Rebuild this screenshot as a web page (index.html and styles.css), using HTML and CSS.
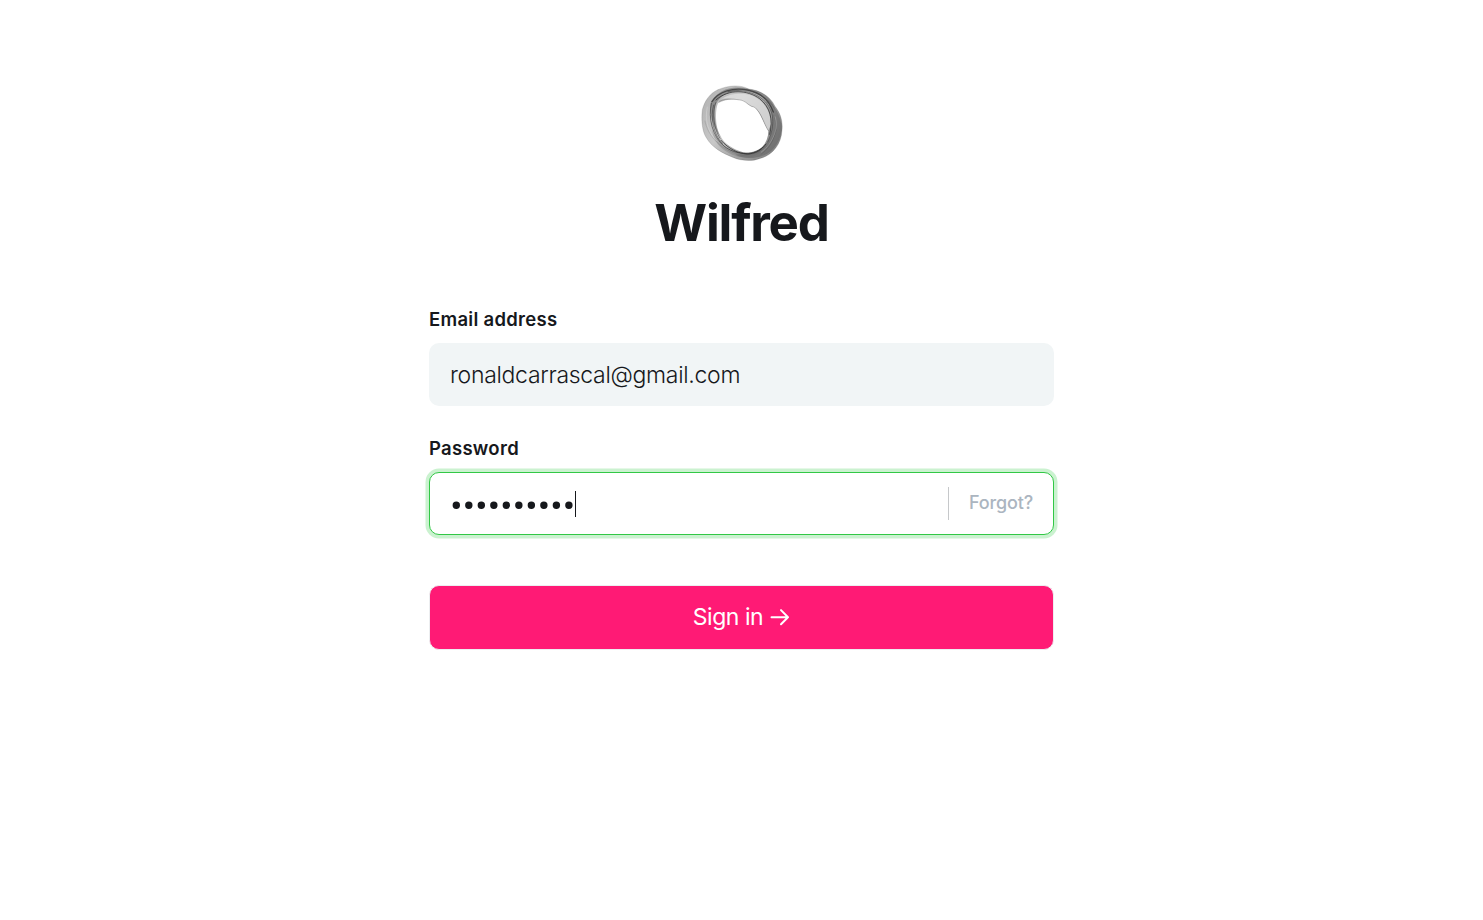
FILE: index.html
```html
<!DOCTYPE html>
<html lang="en">
<head>
<meta charset="utf-8">
<title>Wilfred</title>
<link rel="stylesheet" href="styles.css">
</head>
<body>
<main class="signin">
  <svg class="logo" viewBox="0 0 300 285" aria-hidden="true">
    <defs>
      <linearGradient id="shade" x1="0" y1="0.2" x2="1" y2=".8">
        <stop offset="0" stop-color="#b4b4b4"/>
        <stop offset=".35" stop-color="#c8c8c8"/>
        <stop offset=".65" stop-color="#a2a2a2"/>
        <stop offset="1" stop-color="#808080"/>
      </linearGradient>
    </defs>
    <path fill="url(#shade)" fill-rule="evenodd" d="M78 41C108 28 145 25 170 39C206 43 236 62 249 91C265 111 273 135 270 163C268 207 239 240 202 248C180 257 146 254 125 245C92 232 60 215 43 185C31 168 27 132 31 101C38 74 54 51 78 41ZM78 82C104 67 132 70 150 73C167 79 168 91 188 94C206 111 213 138 229 164C229 184 222 201 209 215C192 230 171 233 151 228C123 219 98 204 87 183C70 157 68 105 78 82Z"/>
    <path fill="#e2e2e2" fill-opacity=".75" d="M88 69C119 50 148 52 175 57C213 69 237 105 237 145L229 164C214 143 211 112 188 94C171 91 166 81 150 73C128 71 108 65 88 69Z"/>
    <path fill="#555" fill-opacity=".42" d="M215 62C244 83 250 157 230 193C212 222 180 239 130 235C155 254 213 248 238 224C257 207 270 181 269 150C266 126 252 83 215 62Z"/>
    <path fill="#555" fill-opacity=".45" d="M57 77C80 42 118 26 172 39C210 43 243 68 249 102C226 65 188 44 145 44C106 46 80 62 71 87C64 113 70 157 88 184C64 161 50 111 57 77Z"/>
    <path fill="#666" fill-opacity=".3" d="M60 161C77 202 112 229 162 231C191 232 210 219 219 203C211 235 180 249 145 243C101 233 66 207 60 161Z"/>
    <g fill="none" stroke="#222" stroke-linecap="round">
      <path stroke-width="4" stroke-opacity=".65" d="M60 77C80 45 124 34 166 42C204 49 231 72 244 108"/>
      <path stroke-width="3" stroke-opacity=".55" d="M58 82C48 126 61 182 97 211C130 236 178 242 213 213"/>
      <path stroke-width="3" stroke-opacity=".7" d="M87 193C112 220 137 232 166 234C188 233 208 224 222 204M72 72C110 37 167 42 203 68C235 94 244 130 233 175"/>
      <path stroke-width="2" stroke-opacity=".65" d="M71 80C59 111 65 157 84 187M65 87C54 122 64 176 91 203M108 47C148 38 193 49 221 78C250 112 247 158 227 198"/>
      <path stroke-width="1.8" stroke-opacity=".4" d="M82 76C109 64 128 70 150 73C166 79 171 91 188 94C209 112 214 140 229 164"/>
      <path stroke-width="1.5" stroke-opacity=".3" d="M78 41C108 28 145 25 170 39C206 43 236 62 249 91C265 111 273 135 270 163C268 207 239 240 202 248C180 257 146 254 125 245C92 232 60 215 43 185C31 168 27 132 31 101C38 74 54 51 78 41"/>
      <path stroke-width="1.5" stroke-opacity=".25" d="M39 135C47 182 91 225 145 236C190 242 243 213 253 161M245 119C261 155 248 207 207 235"/>
    </g>
    <path fill="none" stroke="#fff" stroke-width="3" stroke-opacity=".22" d="M46 92C37 134 49 171 76 196M249 121C261 158 243 201 207 229"/>
  </svg>
  <h1 class="title">Wilfred</h1>
  <form class="form">
    <div class="group">
      <div class="label">Email address</div>
      <div class="field"><span class="value">ronaldcarrascal@gmail.com</span></div>
    </div>
    <div class="group">
      <div class="label">Password</div>
      <div class="field field-focus">
        <svg class="dots" viewBox="0 0 126 26" aria-label="Password, 10 characters">
          <path d="M6.3 14.3h.01m12.5 0h.01m12.5 0h.01m12.5 0h.01m12.5 0h.01m12.5 0h.01m12.5 0h.01m12.5 0h.01m12.5 0h.01m12.5 0h.01"/>
          <rect x="125" y="0" width="1" height="26"/>
        </svg>
        <a class="forgot">Forgot?</a>
      </div>
    </div>
    <button class="submit" type="button"><span>Sign in</span>
      <svg class="arrow" viewBox="0 0 20 18" aria-hidden="true"><path d="M1.5 9.2H18M11 2.1l7 7.1-7 7.1"/></svg>
    </button>
  </form>
</main>
</body>
</html>
```
FILE: styles.css
```css
* { box-sizing: border-box; }
body {
  margin: 0;
  background: #fff;
  color: #16181c;
  font-family: Inter, "Liberation Sans", sans-serif;
}
.signin {
  width: 625px;
  margin: 0 auto;
  padding-top: 76px;
  display: flex;
  flex-direction: column;
  align-items: center;
}
.logo { display: block; width: 100px; height: 95px; }
.title {
  margin: 22px 0 0;
  font-size: 51px;
  line-height: 60px;
  font-weight: 700;
  letter-spacing: -1.2px;
}
.form { width: 100%; margin-top: 54px; }
.group { margin-bottom: 30px; }
.label {
  height: 36px;
  line-height: 24px;
  font-size: 18.5px;
  font-weight: 600;
  letter-spacing: .28px;
}
.field {
  height: 63px;
  display: flex;
  align-items: center;
  padding: 0 20px 0 21px;
  border-radius: 10px;
  background: #f1f5f6;
}
.value {
  height: 26px;
  line-height: 26px;
  overflow: hidden;
  font-size: 23px;
  font-weight: 300;
  letter-spacing: -.3px;
}
.field-focus {
  justify-content: space-between;
  padding-left: 20px;
  background: #fff;
  border: 1px solid #32c846;
  box-shadow: 0 0 0 3.5px #cbf2d0;
}
.dots { width: 126px; height: 26px; fill: #16181c; }
.dots path { fill: none; stroke: #16181c; stroke-width: 7.4; stroke-linecap: round; }
.forgot {
  height: 33px;
  line-height: 32px;
  padding-left: 20px;
  border-left: 1px solid #c6c8ca;
  color: #abb5c0;
  font-size: 18px;
  font-weight: 500;
  letter-spacing: -.15px;
}
.submit {
  width: 100%;
  height: 65px;
  margin-top: 50px;
  padding: 0 0 2px;
  display: flex;
  align-items: center;
  justify-content: center;
  gap: 7px;
  border: 1px solid #eceef0;
  border-radius: 10px;
  background: #ff1a75;
  color: #fff;
  font-family: inherit;
  font-size: 23px;
  letter-spacing: -.45px;
}
.arrow { width: 20px; height: 18px; fill: none; stroke: #fff; stroke-width: 2; stroke-linecap: round; stroke-linejoin: round; }
```
